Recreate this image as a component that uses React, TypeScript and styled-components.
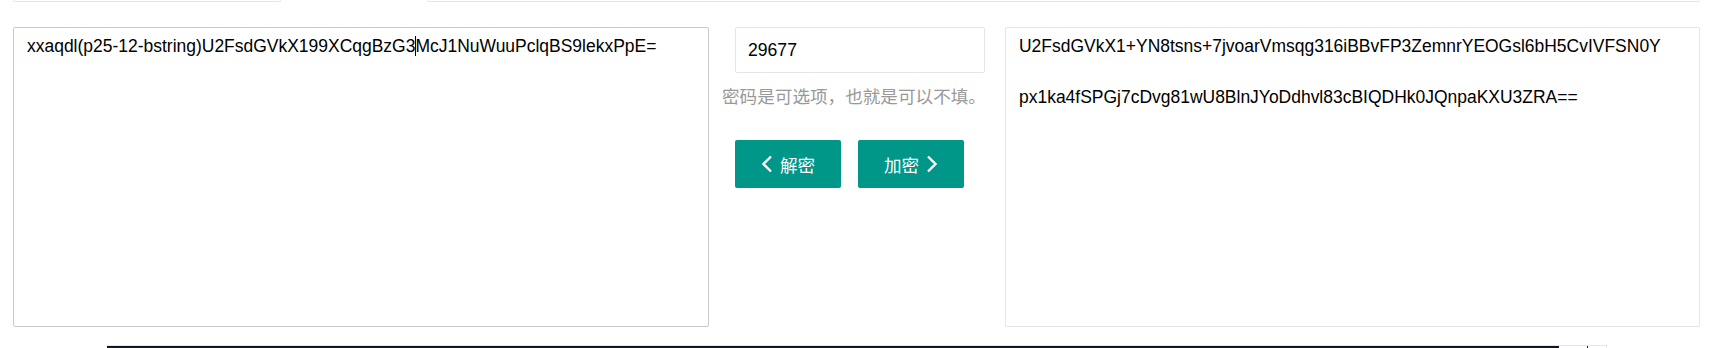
import styled, { createGlobalStyle } from "styled-components";

const GlobalStyle = createGlobalStyle`
  body {
    margin: 0;
    background: #fff;
    font-family: "Liberation Sans", "Noto Sans CJK SC", sans-serif;
  }
`;

const Page = styled.div`
  width: 1725px;
  height: 348px;
  overflow: hidden;
`;

// bottom edges of the boxes above, cut off by the screenshot
const TopStrip = styled.div`
  display: flex;
  height: 2px;
  padding-left: 13px;
`;

const TopSeg = styled.div<{ $w: number; $gap?: number }>`
  width: ${(p) => p.$w}px;
  margin-left: ${(p) => p.$gap || 0}px;
  height: 1px;
  border: 1px solid #e6e6e6;
  border-top: none;
  border-radius: 0 0 2px 2px;
`;

const Main = styled.div`
  display: flex;
  margin-top: 25px;
  padding-left: 13px;
`;

const Editor = styled.div<{ $focus?: boolean; $w: number }>`
  box-sizing: border-box;
  width: ${(p) => p.$w}px;
  height: 300px;
  padding: 6px 13px;
  border: 1px solid ${(p) => (p.$focus ? "#c9c9c9" : "#e6e6e6")};
  border-radius: 2px;
  font-size: 17.48px;
  line-height: 25.5px;
  color: #000;
  white-space: pre-wrap;
  word-break: break-all;
`;

const Caret = styled.span`
  display: inline-block;
  width: 1px;
  height: 20px;
  margin-right: -1px;
  background: #000;
  vertical-align: -4px;
`;

const Middle = styled.div`
  box-sizing: border-box;
  width: 296px;
  padding-left: 26px;
  display: flex;
  flex-direction: column;
`;

const PwdInput = styled.div`
  box-sizing: border-box;
  width: 250px;
  height: 46px;
  padding-left: 12px;
  border: 1px solid #e6e6e6;
  border-radius: 2px;
  display: flex;
  align-items: center;
  font-size: 17.6px;
  color: #000;
`;

const Hint = styled.div`
  margin: 12px 0 0 -13px;
  font-size: 17.6px;
  line-height: 24px;
  color: #999;
  white-space: nowrap;
`;

const BtnRow = styled.div`
  display: flex;
  gap: 17px;
  margin-top: 31px;
`;

const Btn = styled.div`
  box-sizing: border-box;
  width: 106px;
  height: 48px;
  border-radius: 2px;
  background: #009688;
  color: #fff;
  font-size: 17.6px;
  display: flex;
  align-items: center;
  justify-content: center;
  gap: 7px;
`;

const Bottom = styled.div`
  display: flex;
  margin: 18px 0 0 107px;
  width: 1500px;
  height: 4px;
  border-top: 1px solid #e6e6e6;
`;

const Dark = styled.div`
  flex: 1;
  background: #141820;
`;

const Tail = styled.div`
  width: 48px;
  border-right: 1px solid #e6e6e6;
  display: flex;
  padding-left: 28px;
  box-sizing: border-box;
`;

const TailLine = styled.div`
  width: 1px;
  background: #222;
`;

function Chevron({ dir }: { dir: "left" | "right" }) {
  return (
    <svg width="12" height="18" viewBox="0 0 12 18">
      <path
        d={dir === "left" ? "M10 1.5 L2.5 9 L10 16.5" : "M2 1.5 L9.5 9 L2 16.5"}
        fill="none"
        stroke="#fff"
        strokeWidth="2.4"
      />
    </svg>
  );
}

export default function App() {
  return (
    <Page>
      <GlobalStyle />
      <TopStrip>
        <TopSeg $w={266} />
        <TopSeg $w={1271} $gap={146} />
      </TopStrip>
      <Main>
        <Editor $focus $w={696}>
          xxaqdl(p25-12-bstring)U2FsdGVkX199XCqgBzG3
          <Caret />
          McJ1NuWuuPclqBS9lekxPpE=
        </Editor>
        <Middle>
          <PwdInput>29677</PwdInput>
          <Hint>密码是可选项，也就是可以不填。</Hint>
          <BtnRow>
            <Btn>
              <Chevron dir="left" />
              <span>解密</span>
            </Btn>
            <Btn>
              <span>加密</span>
              <Chevron dir="right" />
            </Btn>
          </BtnRow>
        </Middle>
        <Editor $w={695}>
          {"U2FsdGVkX1+YN8tsns+7jvoarVmsqg316iBBvFP3ZemnrYEOGsl6bH5CvIVFSN0Y\n\npx1ka4fSPGj7cDvg81wU8BlnJYoDdhvl83cBIQDHk0JQnpaKXU3ZRA=="}
        </Editor>
      </Main>
      <Bottom>
        <Dark />
        <Tail>
          <TailLine />
        </Tail>
      </Bottom>
    </Page>
  );
}
